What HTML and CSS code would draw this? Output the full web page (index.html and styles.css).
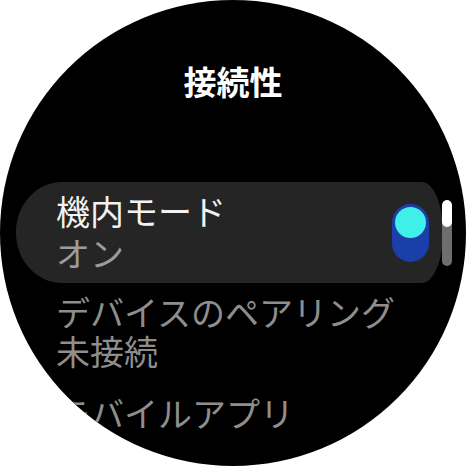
FILE: index.html
```html
<!DOCTYPE html>
<html lang="ja">
<head>
<meta charset="utf-8">
<title>接続性</title>
<link rel="stylesheet" href="styles.css">
</head>
<body>
<div class="watch">
  <div class="screen">
    <h1 class="title">接続性</h1>
    <div class="card">
      <div class="card-text">
        <div class="item-title">機内モード</div>
        <div class="item-sub">オン</div>
      </div>
      <div class="switch"><div class="knob"></div></div>
    </div>
    <div class="item">
      <div class="item-line">デバイスのペアリング</div>
      <div class="item-line">未接続</div>
    </div>
    <div class="item item-last">
      <div class="item-line">モバイルアプリ</div>
    </div>
  </div>
  <div class="scrollbar"><div class="scroll-thumb"></div></div>
</div>
</body>
</html>
```
FILE: styles.css
```css
html, body {
  margin: 0;
  padding: 0;
  background: #ffffff;
}
body {
  width: 466px;
  height: 466px;
  font-family: "Noto Sans CJK JP", "Noto Sans", sans-serif;
}
.watch {
  width: 466px;
  height: 466px;
  border-radius: 50%;
  background: #000000;
  overflow: hidden;
  position: relative;
}
.screen {
  display: flex;
  flex-direction: column;
  padding-top: 65px;
}
.title {
  margin: 0;
  font-size: 33px;
  line-height: 33px;
  font-weight: 700;
  color: #ffffff;
  text-align: center;
}
.card {
  margin: 84px 23px 0 16px;
  height: 101px;
  box-sizing: border-box;
  background: #252525;
  border-radius: 46px 21px 21px 46px / 50px 50px 50px 50px;
  display: flex;
  align-items: center;
  padding: 0 14px 0 40px;
}
.card-text {
  flex: 1;
  display: flex;
  flex-direction: column;
  margin-top: -2px;
}
.item-title {
  font-size: 34px;
  line-height: 42px;
  color: #f2f2f2;
  white-space: nowrap;
}
.item-sub {
  font-size: 34px;
  line-height: 42px;
  color: #9c9c9c;
  white-space: nowrap;
}
.switch {
  width: 37px;
  height: 58px;
  border-radius: 19px;
  background: #1b3fa8;
  box-sizing: border-box;
  padding: 3px;
  display: flex;
  justify-content: center;
}
.knob {
  width: 31px;
  height: 31px;
  border-radius: 50%;
  background: #3ff0e8;
}
.item {
  margin-top: 9px;
  padding-left: 56px;
  display: flex;
  flex-direction: column;
}
.item-last {
  margin-top: 23px;
}
.item-line {
  font-size: 34px;
  line-height: 39px;
  color: #8e8e8e;
  white-space: nowrap;
}
.scrollbar {
  position: absolute;
  left: 442px;
  top: 200px;
  width: 10px;
  height: 66px;
  border-radius: 5px;
  background: #6e6e6e;
  overflow: hidden;
}
.scroll-thumb {
  height: 27px;
  background: #ffffff;
  border-radius: 5px;
}
```
